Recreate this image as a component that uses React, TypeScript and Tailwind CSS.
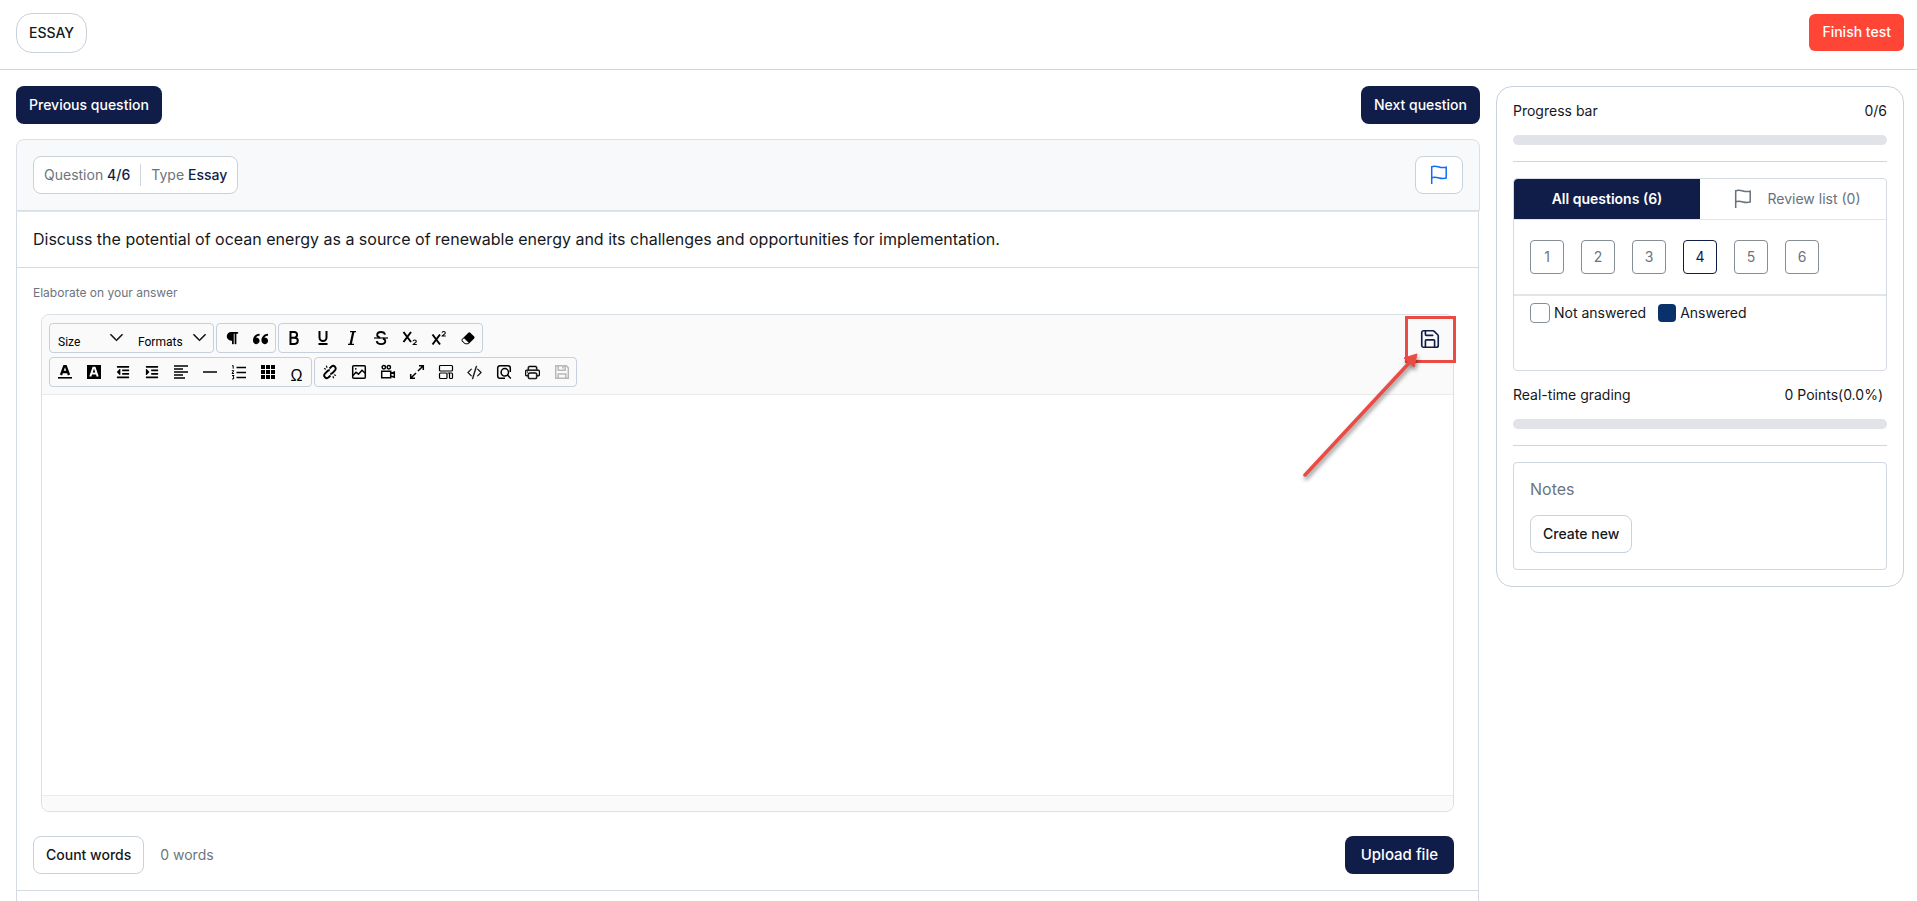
import { ReactNode } from "react";
import { Save } from "lucide-react";
import { BsChevronDown, BsCodeSlash, BsEraserFill, BsPrinter } from "react-icons/bs";
import { FaIndent, FaOutdent, FaParagraph } from "react-icons/fa";
import { ImQuotesLeft } from "react-icons/im";

const FlagIcon = ({ className }: { className?: string }) => (
  <svg viewBox="0 0 18 20" fill="none" stroke="currentColor" strokeWidth="1.5" className={className}>
    <path d="M1.7 19V1.8c2.5-.9 4.8-.5 7.3.2s4.5.8 7.2.2v10.8c-2.6.7-4.8.5-7.2-.1s-4.8-1-7.3-.1" />
  </svg>
);

const Glyph = ({ children }: { children: ReactNode }) => (
  <svg
    viewBox="0 0 16 16"
    width="16"
    height="16"
    fill="none"
    stroke="currentColor"
    strokeWidth="1.5"
  >
    {children}
  </svg>
);

const inlineTools = [
  {
    label: "Bold",
    icon: (
      <Glyph>
        <path strokeWidth="2" d="M4.5 2v12M4.5 2h4.2a2.9 2.9 0 0 1 0 5.7H4.5M8.7 7.7a3.1 3.1 0 0 1 0 6.2H3.5M3.5 2h2" />
      </Glyph>
    ),
  },
  {
    label: "Underline",
    icon: (
      <Glyph>
        <path strokeWidth="2" d="M4.5 1v6.5a3.5 3.5 0 0 0 7 0V1M3.500 14h9" />
      </Glyph>
    ),
  },
  {
    label: "Italic",
    icon: (
      <Glyph>
        <path strokeWidth="1.3" d="M6 1.7h6M4 14.3h6" />
        <path strokeWidth="2.2" d="M9.4 1.5 6.6 14.5" />
      </Glyph>
    ),
  },
  {
    label: "Strikethrough",
    icon: (
      <Glyph>
        <path strokeWidth="1.9" d="M12 4.6C11.6 2.8 10 2 8 2 5.7 2 4.2 3 4.2 4.9c0 1.4.9 2.2 2.8 2.7M10 8.5c1.5.5 2.3 1.3 2.3 2.6 0 2-1.7 3-4.2 3s-4-.9-4.4-3" />
        <path strokeWidth="1.2" d="M1 8h14" />
      </Glyph>
    ),
  },
  {
    label: "Subscript",
    icon: (
      <Glyph>
        <path strokeWidth="2" d="m1.5 2 7.5 10M9 2 1.5 12" />
        <path strokeWidth="1.1" d="M11 11.3c.2-1.7 3.3-1.7 3.3.1 0 1.1-2.3 1.9-3.1 3.1h3.6" />
      </Glyph>
    ),
  },
  {
    label: "Superscript",
    icon: (
      <Glyph>
        <path strokeWidth="2" d="m1.5 4.5 7.5 10M9 4.5l-7.5 10" />
        <path strokeWidth="1.1" d="M11 2.8c.2-1.7 3.3-1.7 3.3.1 0 1.1-2.3 1.9-3.1 3.1h3.6" />
      </Glyph>
    ),
  },
  { label: "Remove format", icon: <BsEraserFill size={14} /> },
];

const blockTools = [
  {
    label: "Text color",
    icon: (
      <Glyph>
        <path strokeWidth="2.3" d="M4 11 7.2 2.2h1.6L12 11M5.5 8h5" />
        <path strokeWidth="1.6" d="M1 13.8h14" />
      </Glyph>
    ),
  },
  {
    label: "Highlight color",
    icon: (
      <Glyph>
        <path fill="currentColor" stroke="none" d="M1 1h14v14H1z" />
        <path stroke="#fafafa" strokeWidth="2" d="M4.3 12.5 7.3 3.7h1.4l3 8.8M5.5 9.5h5" />
      </Glyph>
    ),
  },
  { label: "Outdent", icon: <FaOutdent size={14} /> },
  { label: "Indent", icon: <FaIndent size={14} /> },
  {
    label: "Align",
    icon: (
      <Glyph>
        <path d="M1 2h14M1 5h9M1 8h14M1 11h9M1 14h11" />
      </Glyph>
    ),
  },
  {
    label: "Horizontal line",
    icon: (
      <Glyph>
        <path d="M1 8h14" />
      </Glyph>
    ),
  },
  {
    label: "Numbered list",
    icon: (
      <Glyph>
        <path strokeWidth="1.7" d="M5.5 3.5H15M5.5 8.5H15M5.5 13.5H15" />
        <path strokeWidth="1" d="M1 1.7h1.2v3M.8 6.7h2L1 9.5h2M1 11.5h2L2 13l1 .8-.7 1.2H1" />
      </Glyph>
    ),
  },
  {
    label: "Table",
    icon: (
      <Glyph>
        <path
          fill="currentColor"
          stroke="none"
          d="M1 1h4v4H1zM6 1h4v4H6zM11 1h4v4h-4zM1 6h4v4H1zM6 6h4v4H6zM11 6h4v4h-4zM1 11h4v4H1zM6 11h4v4H6zM11 11h4v4h-4z"
        />
      </Glyph>
    ),
  },
  {
    label: "Special characters",
    icon: <span className="pt-2 font-['Liberation_Sans'] text-base leading-5">Ω</span>,
  },
];

const insertTools = [
  {
    label: "Insert link",
    icon: (
      <Glyph>
        <path strokeWidth="1.9" d="M7.5 4.5 9.3 2.8a2.5 2.5 0 0 1 3.7 3.6L10.5 9c-.7.6-1.5.8-2.3.6M8.5 11.5l-1.8 1.7A2.5 2.5 0 0 1 3 9.6L5.5 7c.7-.6 1.5-.8 2.3-.6" />
        <path strokeWidth="1.2" d="m2 4.5 2 .8M4.3 1.8l.8 2M14 11.5l-2-.8M11.7 14.2l-.8-2" />
      </Glyph>
    ),
  },
  {
    label: "Insert image",
    icon: (
      <Glyph>
        <rect x="1.7" y="1.7" width="12.6" height="12.6" rx="1" />
        <path d="m2 11.5 3-3.3 2.5 2 3.5-4 3.3 3" />
        <circle cx="4.8" cy="4.8" r=".9" fill="currentColor" stroke="none" />
      </Glyph>
    ),
  },
  {
    label: "Insert video",
    icon: (
      <Glyph>
        <circle cx="3.8" cy="3.3" r="1.7" />
        <circle cx="8.8" cy="3.3" r="1.7" />
        <path d="M1.7 7.2h9v6.6h-9zM10.7 9.5 14.3 8v5.3l-3.6-1.3" />
      </Glyph>
    ),
  },
  {
    label: "Fullscreen",
    icon: (
      <Glyph>
        <path d="M9 7l5.3-5.3M10 1.7h4.3V6M7 9l-5.3 5.3M1.7 10v4.3H6" />
      </Glyph>
    ),
  },
  {
    label: "Insert template",
    icon: (
      <Glyph>
        <g strokeWidth="1.2">
          <rect x="1.5" y="1.5" width="13" height="5.5" rx="1" />
          <rect x="1.5" y="9" width="7.5" height="5.5" rx="1" />
          <path d="M9.5 9h4a1 1 0 0 1 1 1v3.5a1 1 0 0 1-1 1h-1a1 1 0 0 1-1-1V9" />
        </g>
      </Glyph>
    ),
  },
  { label: "HTML code", icon: <BsCodeSlash size={15} className="stroke-[0.4]" /> },
  {
    label: "Preview",
    icon: (
      <Glyph>
        <path d="M14.3 8V4A2.3 2.3 0 0 0 12 1.700H4A2.3 2.3 0 0 0 1.7 4v8A2.3 2.3 0 0 0 4 14.3h5" />
        <circle cx="8.8" cy="8.3" r="3.7" />
        <path d="m11.5 11 3.3 3.5" />
      </Glyph>
    ),
  },
  { label: "Print", icon: <BsPrinter size={15} className="stroke-[0.5]" /> },
  {
    label: "Save",
    icon: (
      <span className="text-[#b8b8b8]">
        <Glyph>
          <path d="M1.7 1.7h10.6l2 2v10.6H1.7zM4.2 1.7v4.6h7V1.7M4.2 14v-4h7.6v4M9 2.5v2" />
        </Glyph>
      </span>
    ),
  },
];

const ToolGroup = ({ tools }: { tools: { label: string; icon: ReactNode }[] }) => (
  <div className="flex h-[30px] rounded border border-[#c5d0dc]">
    {tools.map((tool) => (
      <button
        key={tool.label}
        aria-label={tool.label}
        className="flex w-[29px] cursor-pointer items-center justify-center"
      >
        {tool.icon}
      </button>
    ))}
  </div>
);

const ToolSelect = ({ label, className }: { label: string; className: string }) => (
  <div className={`relative ${className}`}>
    <select
      aria-label={label}
      className="h-full w-full appearance-none pt-2 pl-2 font-[Roboto] text-xs outline-none"
    >
      <option>{label}</option>
    </select>
    <BsChevronDown
      size={15}
      className="pointer-events-none absolute top-[6px] right-[6px] stroke-[0.6]"
    />
  </div>
);

const Meter = ({ label, value }: { label: string; value: ReactNode }) => (
  <div className="border-b border-[#cfd6dc] pb-4">
    <div className="flex justify-between text-sm leading-6">
      <span>{label}</span>
      {value}
    </div>
    <div className="mt-3 h-[10px] rounded-full bg-[#e2e3e9]" />
  </div>
);

const Toolbar = () => (
  <div className="flex items-start justify-between rounded-t-lg border-b border-[#ebebeb] bg-[#fafafa] pt-2 pb-[7px] pl-[7px] text-black">
    <div className="flex flex-col gap-1">
      <div className="flex gap-[2px]">
        <div className="flex h-[30px] rounded border border-[#c5d0dc]">
          <ToolSelect label="Size" className="w-20" />
          <ToolSelect label="Formats" className="w-[83px]" />
        </div>
        <ToolGroup
          tools={[
            { label: "Paragraph", icon: <FaParagraph size={14} /> },
            { label: "Quote", icon: <ImQuotesLeft size={15} /> },
          ]}
        />
        <ToolGroup tools={inlineTools} />
      </div>
      <div className="flex gap-[2px]">
        <ToolGroup tools={blockTools} />
        <ToolGroup tools={insertTools} />
      </div>
    </div>
    <div className="relative">
      <button
        aria-label="Save answer"
        className="flex h-8 w-[46px] cursor-pointer items-center justify-center text-[#101d49]"
      >
        <Save size={22} strokeWidth={1.8} />
      </button>
      {/* callout pointing at the save button */}
      <svg
        viewBox="0 0 160 170"
        className="pointer-events-none absolute -top-2 right-0 z-10 h-[170px] w-[160px] drop-shadow-[1px_3px_2px_rgba(0,0,0,0.45)]"
        aria-hidden="true"
      >
        <path d="M12 160 118 46" stroke="#ea4b45" strokeWidth="3.5" strokeLinecap="round" />
        <path d="M124 39 121 52 111 43z" fill="#ea4b45" stroke="#ea4b45" />
      </svg>
      <div className="pointer-events-none absolute -top-[7px] -right-[3px] h-[47px] w-[51px] border-3 border-[#ea4b45]" />
    </div>
  </div>
);

const Sidebar = () => (
  <aside className="w-[408px] shrink-0 self-start rounded-2xl border border-[#c9d1d9] p-4 pt-3">
    <Meter label="Progress bar" value={<span>0/6</span>} />
    <div className="mt-4 h-[193px] rounded border border-[#d5dbe1]">
      <div className="flex h-[41px] border-b border-[#e2e6ea] text-sm">
        <button className="w-1/2 cursor-pointer rounded-tl bg-[#101d49] font-semibold text-white">
          All questions (6)
        </button>
        <button className="flex w-1/2 cursor-pointer items-center justify-center gap-4 pl-2 text-[#67727e]">
          <FlagIcon className="h-5 w-[18px]" />
          Review list (0)
        </button>
      </div>
      <div className="flex gap-[17px] border-b-2 border-[#e1e5e9] px-4 py-5 text-sm text-[#6c757d]">
        {[1, 2, 3, 4, 5, 6].map((n) => (
          <button
            key={n}
            className={
              n === 4
                ? "h-[34px] w-[34px] cursor-pointer rounded border border-[#101d49] text-[#101d49]"
                : "h-[34px] w-[34px] cursor-pointer rounded border border-[#868e96]"
            }
          >
            {n}
          </button>
        ))}
      </div>
      <div className="flex items-center px-4 pt-[5px] text-sm leading-6">
        <span className="mr-1 h-5 w-5 rounded border border-[#868e96]" />
        Not answered
        <span className="mr-1 ml-3 h-[18px] w-[18px] rounded bg-[#083269]" />
        Answered
      </div>
    </div>
    <div className="mt-3">
      <Meter label="Real-time grading" value={<span className="pr-1">0 Points(0.0%)</span>} />
    </div>
    <section className="mt-4 rounded border border-[#d0d7de] p-4 pt-[14px]">
      <h2 className="text-base text-[#6c757d]">Notes</h2>
      <button className="mt-[14px] h-[38px] cursor-pointer rounded-lg border border-[#c9d1d9] px-3 text-sm font-medium">
        Create new
      </button>
    </section>
  </aside>
);

const App = () => {
  return (
    <div className="flex min-h-screen flex-col bg-white font-[Inter,sans-serif] text-[#15181c]">
      <header className="flex items-center justify-between border-b border-[#cfd6dc] pt-[13px] pr-[13px] pb-4 pl-4 text-sm">
        <button className="h-10 cursor-pointer rounded-2xl border border-[#c9d1d9] px-3 font-medium">
          ESSAY
        </button>
        <button className="-mt-[2px] h-[37px] cursor-pointer rounded-md bg-[#ff4535] px-[13px] font-medium text-white">
          Finish test
        </button>
      </header>

      <main className="flex flex-1 gap-4 pt-4 pr-[13px] pl-4">
        <div className="flex min-w-0 flex-1 flex-col">
          <div className="flex justify-between text-sm font-medium text-white">
            <button className="h-[38px] cursor-pointer rounded-lg bg-[#101d49] px-[13px]">
              Previous question
            </button>
            <button className="h-[38px] cursor-pointer rounded-lg bg-[#101d49] px-[13px]">
              Next question
            </button>
          </div>

          <div className="mt-[15px] flex items-center justify-between rounded-t-lg border border-[#d9dfe5] bg-[#f8f9fb] p-4">
            <div className="flex h-[38px] items-center rounded-lg border border-[#c9d1d9] bg-white px-[10px] text-sm text-[#6c757d]">
              <span>
                Question <span className="font-medium text-[#101d49]">4/6</span>
              </span>
              <span className="mx-[10px] h-[22px] w-px bg-[#ced4da]" />
              <span>
                Type <span className="font-medium text-[#101d49]">Essay</span>
              </span>
            </div>
            <button
              aria-label="Flag question"
              className="flex h-[38px] w-12 cursor-pointer items-center justify-center rounded-lg border border-[#c9d1d9] bg-white text-[#0d6efd]"
            >
              <FlagIcon className="h-5 w-[18px]" />
            </button>
          </div>

          <div className="mr-px flex-1 border-x border-t border-[#d3dae1] border-t-[#e1e5e9]">
            <p className="border-b border-[#d3dae1] px-4 py-4 text-base leading-[23px]">
              Discuss the potential of ocean energy as a source of renewable energy and its challenges
              and opportunities for implementation.
            </p>

            <div className="border-b border-[#d3dae1] pt-[17px] pr-6 pb-4 pl-4">
              <label htmlFor="answer" className="block text-xs leading-4 text-[#6c757d]">
                Elaborate on your answer
              </label>
              <div className="mt-[13px] ml-2 rounded-lg border border-[#dae1e7]">
                <Toolbar />
                <textarea
                  id="answer"
                  className="block h-[400px] w-full resize-none p-3 outline-none"
                />
                <div className="h-4 rounded-b-lg border-t border-[#ebebeb] bg-[#fafafa]" />
              </div>

              <div className="mt-6 flex items-center">
                <button className="h-[38px] cursor-pointer rounded-lg border border-[#c9d1d9] px-3 text-sm font-medium">
                  Count words
                </button>
                <span className="ml-4 text-sm text-[#6c757d]">0 words</span>
                <button className="ml-auto h-[38px] cursor-pointer rounded-lg bg-[#101d49] px-4 text-[15px] font-medium text-white">
                  Upload file
                </button>
              </div>
            </div>
          </div>
        </div>

        <Sidebar />
      </main>
    </div>
  );
};

export default App;
